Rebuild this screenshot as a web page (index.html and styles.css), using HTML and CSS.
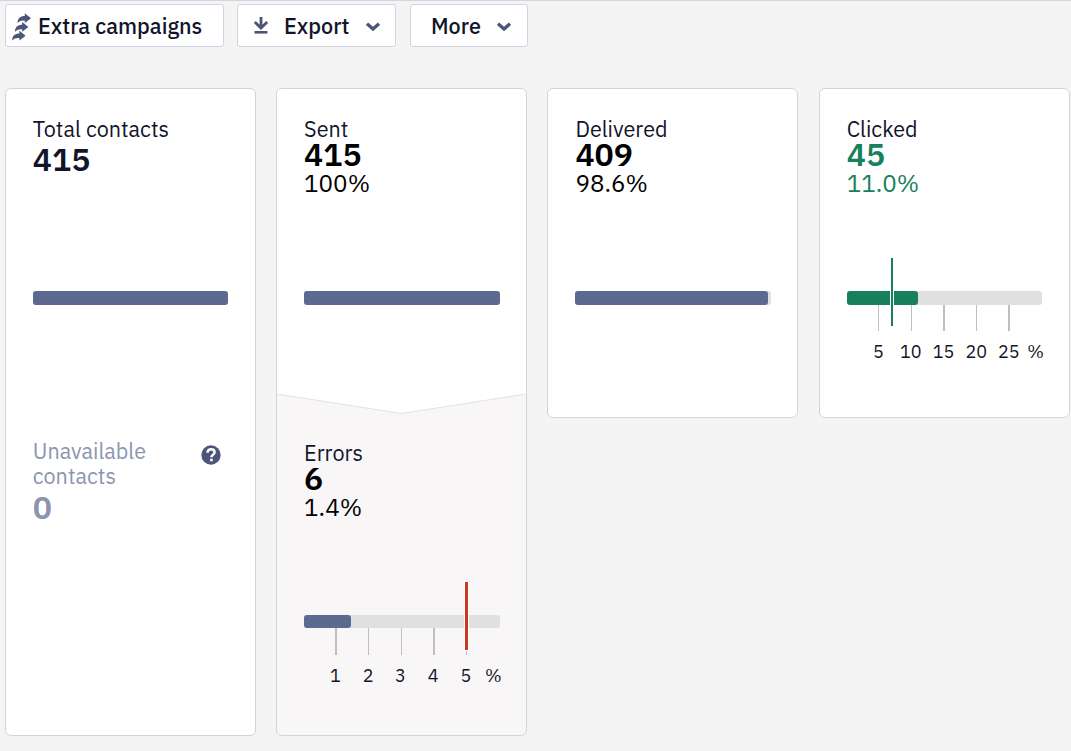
FILE: index.html
```
<!DOCTYPE html>
<html lang="en">
<head>
  <meta charset="UTF-8">
  <title>Campaign statistics</title>
  <link rel="stylesheet" href="styles.css">
</head>
<body>
  <div class="toolbar">
    <button class="btn btn-extra">
      <svg class="icon-extra" width="20" height="28" viewBox="0 0 20 28">
        <g id="arrow">
          <path d="M5.5 10C5.8 5 8.4 3 12.8 3V.2l6.2 5-6.2 4.8V7.5C9.8 7.2 7.6 7.8 5.5 10z"/>
        </g>
        <use href="#arrow" x="-2.6" y="8.8"/>
        <use href="#arrow" x="-5.4" y="17.6"/>
      </svg>
      <span>Extra campaigns</span>
    </button>
    <button class="btn btn-export">
      <svg class="icon-export" width="16" height="18" viewBox="0 0 16 18">
        <path d="M8 0v10M1.8 5L8 11l6.2-6" fill="none" stroke="#4a5578" stroke-width="2.8"/>
        <path d="M1.5 14h13v2.6h-13z"/>
      </svg>
      <span class="export-label">Export</span>
      <svg class="chevron" width="14" height="10" viewBox="0 0 14 10">
        <path d="M1 1.7L7 7l6-5.3" fill="none" stroke="#4a5578" stroke-width="3.4"/>
      </svg>
    </button>
    <button class="btn btn-more">
      <span>More</span>
      <svg class="chevron" width="14" height="10" viewBox="0 0 14 10">
        <path d="M1 1.7L7 7l6-5.3" fill="none" stroke="#4a5578" stroke-width="3.4"/>
      </svg>
    </button>
  </div>

  <div class="cards">
    <div class="card">
      <div class="stage">
        <div class="head total">
          <div class="label">Total contacts</div>
          <div class="number">415</div>
        </div>
        <div class="bar"><div class="fill" style="width:100%"></div></div>
      </div>
      <div class="unavailable">
        <div>
          <div class="label">Unavailable<br>contacts</div>
          <div class="number">0</div>
        </div>
        <svg class="help" width="20" height="20" viewBox="0 0 20 20">
          <circle cx="10" cy="10" r="9.7"/>
          <path d="M6.5 7.7C6.6 5.4 8 4.2 10.1 4.2c2.1 0 3.5 1.2 3.5 3 0 2.3-3.2 2.6-3.2 5.1" fill="none" stroke="#fff" stroke-width="2.5"/>
          <path d="M9.1 13.7h2.6v2.6H9.1z" fill="#fff"/>
        </svg>
      </div>
    </div>

    <div class="card card-sent">
      <div class="stage">
        <div class="head">
          <div class="label">Sent</div>
          <div class="number">415</div>
          <div class="percent">100%</div>
        </div>
        <div class="bar"><div class="fill" style="width:100%"></div></div>
      </div>
      <svg class="notch" width="249" height="20" viewBox="0 0 249 20" preserveAspectRatio="none">
        <path d="M0 0L124.5 19.5L249 0" fill="#fff" stroke="#e2e2e2"/>
      </svg>
      <div class="stage errors">
        <div class="head">
          <div class="label">Errors</div>
          <div class="number">6</div>
          <div class="percent">1.4%</div>
        </div>
        <svg class="gauge" width="200" height="106" viewBox="0 0 200 106">
          <rect class="track" x="0" y="33" width="196" height="13" rx="3"/>
          <rect class="value" x="0" y="33" width="47" height="13" rx="3"/>
          <g class="ticks">
            <rect x="31" y="46" width="2" height="27"/>
            <rect x="64" y="46" width="1" height="27"/>
            <rect x="97" y="46" width="1" height="27"/>
            <rect x="129" y="46" width="2" height="27"/>
            <rect x="162" y="46" width="1" height="27"/>
          </g>
          <rect x="160" y="0" width="5" height="69" fill="#fff"/>
          <rect x="161" y="0" width="3" height="68" fill="#c93823"/>
          <g class="scale">
            <text x="31.5" y="100">1</text>
            <text x="64.2" y="100">2</text>
            <text x="96.5" y="100">3</text>
            <text x="129.2" y="100">4</text>
            <text x="162" y="100">5</text>
            <text x="189.3" y="100">%</text>
          </g>
        </svg>
      </div>
    </div>

    <div class="card">
      <div class="stage">
        <div class="head">
          <div class="label">Delivered</div>
          <div class="number">409</div>
          <div class="percent">98.6%</div>
        </div>
        <div class="bar"><div class="fill" style="width:98.6%"></div></div>
      </div>
    </div>

    <div class="card card-clicked">
      <div class="stage">
        <div class="head">
          <div class="label">Clicked</div>
          <div class="number">45</div>
          <div class="percent">11.0%</div>
        </div>
        <svg class="gauge" width="200" height="106" viewBox="0 0 200 106">
          <rect class="track" x="0" y="33" width="195" height="14" rx="3"/>
          <rect class="value" x="0" y="33" width="71" height="14" rx="3"/>
          <g class="ticks">
            <rect x="31" y="47" width="1" height="26"/>
            <rect x="64" y="47" width="1" height="26"/>
            <rect x="96" y="47" width="2" height="26"/>
            <rect x="129" y="47" width="1" height="26"/>
            <rect x="161" y="47" width="2" height="26"/>
          </g>
          <rect x="43" y="0" width="4" height="68" fill="#fff"/>
          <rect x="44" y="0" width="2" height="68" fill="#18805b"/>
          <g class="scale">
            <text x="31.5" y="100">5</text>
            <text x="63.7" y="100">10</text>
            <text x="96.5" y="100">15</text>
            <text x="129.2" y="100">20</text>
            <text x="161.8" y="100">25</text>
            <text x="188.7" y="100">%</text>
          </g>
        </svg>
      </div>
    </div>
  </div>
</body>
</html>
```
FILE: styles.css
```
* {
  box-sizing: border-box;
}

body {
  margin: 0;
  height: 751px;
  overflow: hidden;
  border-top: 1px solid #d2d4e0;
  background-color: #f4f4f4;
  font-family: "IBM Plex Sans", Roboto, sans-serif;
  color: #11152a;
}

svg {
  display: block;
  flex: none;
  fill: #4a5578;
}

.toolbar {
  display: flex;
  padding: 3px 5px 0;
}

.btn {
  display: flex;
  align-items: center;
  height: 43px;
  padding: 0;
  background: #fff;
  border: 1px solid #d0d4e2;
  border-radius: 3px;
  font-family: inherit;
  font-size: 21.6px;
  font-weight: 500;
  color: #11152a;
  white-space: nowrap;
  cursor: pointer;
}

.btn-extra {
  width: 219px;
  padding-left: 6px;
  margin-right: 13px;
}

.icon-extra {
  margin: 3px 6px 0 0;
}

.btn-export {
  width: 159px;
  padding-left: 15px;
  padding-right: 15px;
  margin-right: 14px;
}

.export-label {
  flex: 1;
  margin-left: 15px;
  text-align: left;
}

.btn-more {
  width: 118px;
  padding-left: 20px;
  padding-right: 16px;
  justify-content: space-between;
}

.chevron {
  margin-top: 2px;
}

.cards {
  display: grid;
  grid-template-columns: repeat(4, 251px);
  column-gap: 20.3px;
  align-items: start;
  margin: 41px 0 0 4.8px;
}

.card {
  min-height: 330px;
  background: #fff;
  border: 1px solid #d0d4e2;
  border-radius: 6px;
  overflow: hidden;
}

.card:first-child,
.card-sent {
  height: 648px;
}

.stage {
  height: 305px;
  padding: 28px 26.5px 0 27px;
}

.head {
  height: 174px;
}

.label {
  font-size: 21.6px;
  line-height: 25px;
}

.number {
  font-size: 32px;
  line-height: 25px;
  font-weight: 600;
  color: #000;
}

.percent {
  margin-top: 3px;
  font-size: 24.2px;
  line-height: 27px;
  color: #000;
}

.total .number {
  padding-top: 5px;
  color: #11152a;
}

.bar {
  height: 14px;
  border-radius: 3px;
  background: #e0e0e0;
}

.fill {
  height: 100%;
  border-radius: 3px;
  background: #5d6a8f;
}

.unavailable {
  display: flex;
  justify-content: space-between;
  padding: 45px 33.5px 0 27px;
}

.unavailable .label,
.unavailable .number {
  color: #8b95b0;
}

.unavailable .number {
  padding-top: 6px;
}

.help {
  margin-top: 6px;
}

.card-sent {
  background: #f8f6f7;
}

.card-sent .stage:first-child {
  background: #fff;
}

.errors {
  height: 321px;
  padding-top: 27px;
}

.gauge {
  margin-top: -33px;
  overflow: visible;
}

.track {
  fill: #e0e0e0;
}

.value {
  fill: #5d6a8f;
}

.ticks {
  fill: #bfbfbf;
}

.scale {
  font-size: 18px;
  fill: #11152a;
  text-anchor: middle;
}

.card-clicked .number,
.card-clicked .percent {
  color: #18805b;
}

.card-clicked .value {
  fill: #18805b;
}
```
